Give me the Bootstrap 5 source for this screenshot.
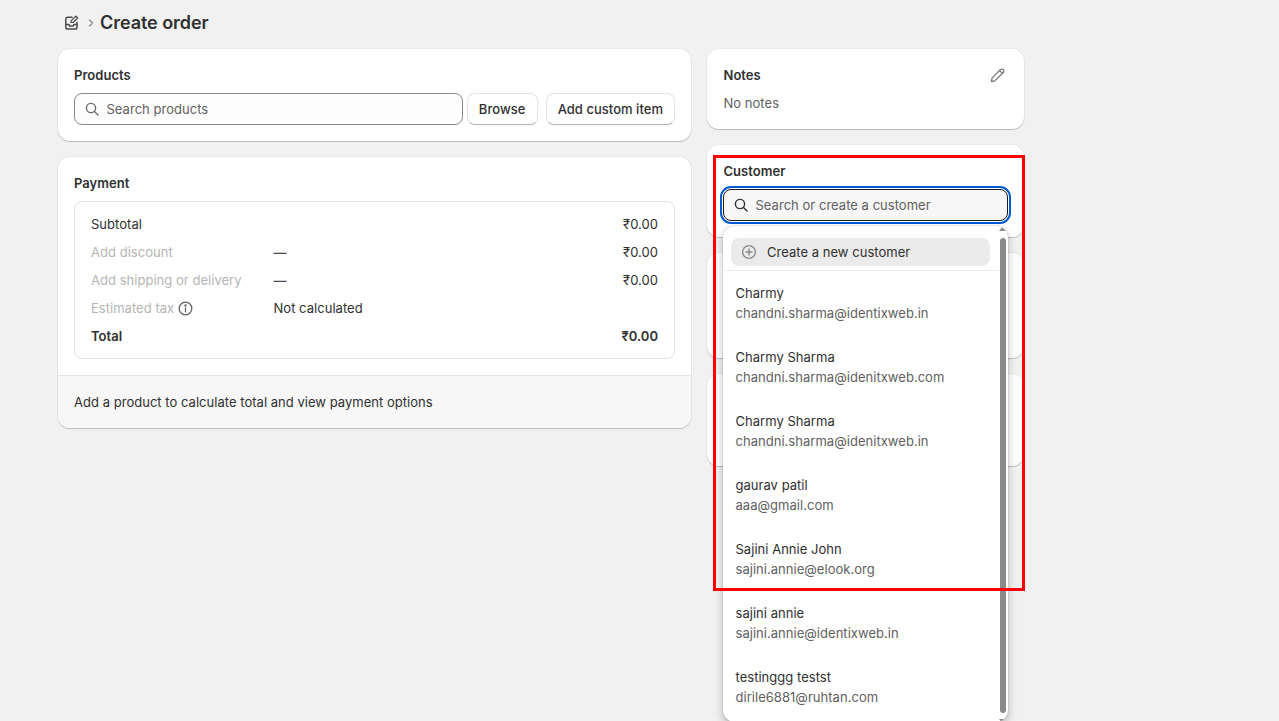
<!DOCTYPE html>
<html lang="en"><head><meta charset="utf-8"><title>Create order</title>
<link href="https://cdn.jsdelivr.net/npm/bootstrap@5.3.0/dist/css/bootstrap.min.css" rel="stylesheet">
<style>
html,body{height:721px;overflow:hidden}
body{background:#f1f1f1;font-family:Inter,"Liberation Sans",sans-serif;font-size:13px;line-height:20px;color:#303030;letter-spacing:.03px}
.pg{width:966px;margin-left:58px}
.hdr{height:49px;padding:0 0 3px 6px}
.hdr h1{font-size:18px;font-weight:600;line-height:24px;margin:0;color:#303030;letter-spacing:-.05px}
.chev{color:#8a8a8a;margin:0 4px 0 6px}
.lc{width:633px}.rc{width:317px}
.pn{background:#fff;border-radius:12px;box-shadow:0 1px 1px rgba(0,0,0,.2),0 0 0 1px rgba(0,0,0,.03);padding:16px}
.pt{font-weight:600;color:#303030}
.rc .pt,.nn{padding-left:.5px}
.sb{height:32px;border:1px solid #8a8a8a;border-radius:8px;background:#fdfdfd;padding:0 9.5px;color:#616161;flex:1;min-width:0}
.sbf{background:#f7f7f7;border-color:#1a1a1a;outline:2px solid #005bd3;outline-offset:1px}
.bt{height:32px;border-radius:8px;background:#fff;font-weight:550;color:#303030;padding:0 11px;border:1px solid #e3e3e3;border-bottom-color:#b5b5b5;display:flex;align-items:center;justify-content:center;box-shadow:0 1px 0 rgba(0,0,0,.03)}
.bw{min-width:71px}
.tb{border:1px solid #e3e3e3;border-radius:8px;padding:8px 16px}
.ln{height:28px;align-items:center}
.c1{width:182.5px}.c2{flex:1}
.dsh{font-weight:600;color:#4a4a4a}
.mut{color:#b5b5b5}
.ftr{background:#f7f7f7;border-top:1px solid #e3e3e3;border-radius:0 0 12px 12px;padding:16px;height:53px;margin:16px -16px -16px}
.dd{position:absolute;left:723px;top:226px;width:285px;height:496px;background:#fff;border-radius:12px;box-shadow:0 4px 8px rgba(0,0,0,.25),0 0 2px rgba(0,0,0,.2);overflow:hidden}
.ddt{padding:12px 8px 4px;height:45px;margin-right:8px;border-bottom:1px solid #ebebeb}
.crt{height:28px;background:#ebebeb;border-radius:8px;margin-right:2px;padding:0 10px;gap:10px;display:flex;align-items:center}
.ci{padding:12px 12.5px;height:64px;line-height:20px}
.ci span{display:block}
.ci .em{color:#616161}
.nn{color:#616161}
.pen{margin-right:2px}
.trk{position:absolute;right:2px;top:12px;width:6px;height:475px;background:#8a8a8a;border-radius:3px}
.ar{position:absolute;right:1px;width:0;height:0;border:4px solid transparent}
.au{top:0;border-bottom:5px solid #8a8a8a;border-top:0}
.ad{top:493px;border-top:5px solid #8a8a8a;border-bottom:0}
.redb{position:absolute;left:713px;top:155px;width:312px;height:436px;border:3px solid #f00;pointer-events:none}
</style></head><body>
<div class="pg">
<div class="hdr d-flex align-items-center">
<svg width="16" height="16" viewBox="0 0 16 16" fill="none" stroke="#4a4a4a" stroke-width="1.5" stroke-linecap="round" stroke-linejoin="round"><path d="M8 2.2H3.6A1.8 1.8 0 0 0 1.8 4v8.2A1.8 1.8 0 0 0 3.6 14h7.6A1.8 1.8 0 0 0 13 12.200V7.500"/><path d="M2 9.500h2.800l.9 1.500h3.400l.9-1.500H13"/><path d="M6.800 7.500 7.200 5.600 11.800 1.200l2 1.800-4.700 4.500z" stroke-width="1.200"/></svg>
<svg class="chev" width="10" height="12" viewBox="0 0 10 12" fill="none" stroke="currentColor" stroke-width="1.300" stroke-linecap="round" stroke-linejoin="round"><path d="M3.500 3l3 3-3 3"/></svg>
<h1>Create order</h1></div>
<div class="d-flex gap-3 align-items-start">
<div class="lc d-flex flex-column gap-3">
<div class="pn"><div class="pt mb-2">Products</div>
<div class="d-flex gap-1"><div class="sb d-flex align-items-center gap-2"><svg width="14" height="14" viewBox="0 0 14 14" fill="none" stroke="#6b6b6b" stroke-width="1.400" stroke-linecap="round"><circle cx="6" cy="6" r="4.600"/><path d="M9.500 9.500 13 13"/></svg>Search products</div>
<div class="bt bw">Browse</div><div class="bt ms-1">Add custom item</div></div></div>
<div class="pn"><div class="pt mb-2">Payment</div>
<div class="tb">
<div class="d-flex ln"><div class="c1">Subtotal</div><div class="c2"></div><div>₹0.00</div></div>
<div class="d-flex ln"><div class="c1 mut">Add discount</div><div class="c2 dsh">—</div><div>₹0.00</div></div>
<div class="d-flex ln"><div class="c1 mut">Add shipping or delivery</div><div class="c2 dsh">—</div><div>₹0.00</div></div>
<div class="d-flex ln"><div class="c1 mut d-flex align-items-center gap-1">Estimated tax <svg width="15" height="15" viewBox="0 0 14 14" fill="none" stroke="#616161" stroke-width="1.200" stroke-linecap="round"><circle cx="7" cy="7" r="5.900"/><path d="M7 6.500v3.600"/><circle cx="7" cy="4.200" r=".5" fill="#616161"/></svg></div><div class="c2">Not calculated</div></div>
<div class="d-flex ln fw-semibold"><div class="c1">Total</div><div class="c2"></div><div>₹0.00</div></div>
</div>
<div class="ftr">Add a product to calculate total and view payment options</div></div>
</div>
<div class="rc d-flex flex-column gap-3">
<div class="pn"><div class="d-flex justify-content-between align-items-center mb-2"><div class="pt">Notes</div><svg class="pen" width="16" height="16" viewBox="0 0 16 16" fill="none" stroke="#777" stroke-width="1.300" stroke-linejoin="round" stroke-linecap="round"><path d="M1.500 14.500l.5-3.400 8.400-8.500a1.900 1.900 0 0 1 2.700 0l.2.200a1.900 1.900 0 0 1 0 2.700l-8.400 8.400z"/><path d="M9.600 3.500l2.900 2.900"/></svg></div><div class="nn">No notes</div></div>
<div class="pn"><div class="pt mb-2">Customer</div><div class="sb sbf d-flex align-items-center gap-2"><svg width="14" height="14" viewBox="0 0 14 14" fill="none" stroke="#303030" stroke-width="1.400" stroke-linecap="round"><circle cx="6" cy="6" r="4.600"/><path d="M9.500 9.500 13 13"/></svg>Search or create a customer</div></div>
<div class="pn" style="height:105px"></div>
<div class="pn" style="height:92px"></div>
</div>
</div>
</div>
<div class="dd">
<div class="ddt"><div class="crt"><svg width="16" height="16" viewBox="0 0 16 16" fill="none" stroke="#8a8a8a" stroke-width="1.400" stroke-linecap="round"><circle cx="8" cy="8" r="6.400"/><path d="M8 5v6M5 8h6"/></svg>Create a new customer</div></div>
<div class="ci"><span>Charmy</span><span class="em">chandni.sharma@identixweb.in</span></div>
<div class="ci"><span>Charmy Sharma</span><span class="em">chandni.sharma@idenitxweb.com</span></div>
<div class="ci"><span>Charmy Sharma</span><span class="em">chandni.sharma@idenitxweb.in</span></div>
<div class="ci"><span>gaurav patil</span><span class="em">aaa@gmail.com</span></div>
<div class="ci"><span>Sajini Annie John</span><span class="em">sajini.annie@elook.org</span></div>
<div class="ci"><span>sajini annie</span><span class="em">sajini.annie@identixweb.in</span></div>
<div class="ci"><span>testinggg testst</span><span class="em">dirile6881@ruhtan.com</span></div>
<div class="trk"></div><div class="ar au"></div><div class="ar ad"></div>
</div>
<div class="redb"></div>
<script src="https://cdn.jsdelivr.net/npm/bootstrap@5.3.0/dist/js/bootstrap.bundle.min.js"></script>
</body></html>
